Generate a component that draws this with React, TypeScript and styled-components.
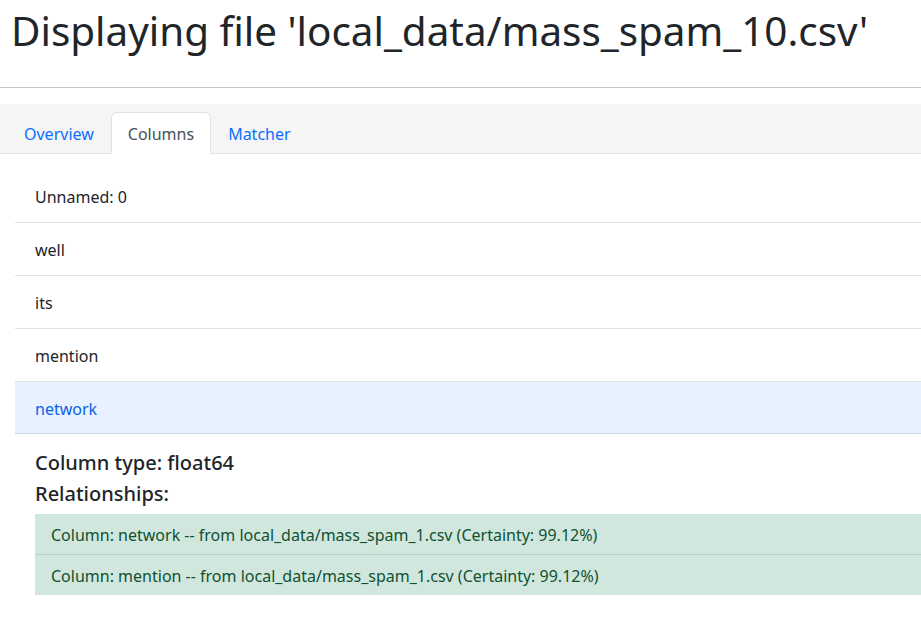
import React from "react";
import styled, { createGlobalStyle } from "styled-components";

const Global = createGlobalStyle`
  html, body { margin: 0; padding: 0; background: #fff; }
  body {
    font-family: "Noto Sans", "Liberation Sans", sans-serif;
    color: #212529;
    font-size: 16px;
    line-height: 1.5;
  }
  * { box-sizing: border-box; }
`;

const Page = styled.div`
  width: 921px;
  overflow: hidden;
`;

const Title = styled.h1`
  margin: 0;
  padding: 7px 0 0 11px;
  font-size: 40.4px;
  font-weight: 400;
  line-height: 48px;
  white-space: nowrap;
`;

const Rule = styled.hr`
  margin: 32px 0 16px;
  border: 0;
  border-top: 1px solid #c6c6c6;
`;

const TabBar = styled.div`
  background: #f5f5f5;
  display: flex;
  padding: 8px 7px 0;
  border-bottom: 1px solid #dee2e6;
`;

const Tab = styled.div<{ $active?: boolean }>`
  padding: 9px 16px 7px;
  line-height: 24px;
  margin-bottom: -1px;
  border: 1px solid ${(p) => (p.$active ? "#dee2e6" : "transparent")};
  border-bottom-color: ${(p) => (p.$active ? "#fff" : "transparent")};
  border-radius: 6px 6px 0 0;
  background: ${(p) => (p.$active ? "#fff" : "transparent")};
  color: ${(p) => (p.$active ? "#495057" : "#0d6efd")};
`;

const Content = styled.div`
  width: 1100px;
  padding: 16px 0 0 15px;
`;

const Row = styled.div<{ $open?: boolean }>`
  height: ${(p) => (p.$open ? 52 : 53)}px;
  display: flex;
  align-items: center;
  padding: ${(p) => (p.$open ? 3 : 2)}px 20px 0;
  border-bottom: 1px solid ${(p) => (p.$open ? "#cfd9e6" : "#dee2e6")};
  background: ${(p) => (p.$open ? "#e7f1ff" : "#fff")};
  color: ${(p) => (p.$open ? "#0c63e4" : "#212529")};
`;

const Body = styled.div`
  padding: 17px 20px 16px;
`;

const Heading = styled.h5<{ $tight?: boolean }>`
  margin: ${(p) => (p.$tight ? "-1px 0 8px" : "0 0 8px")};
  font-size: 20px;
  font-weight: 500;
  line-height: 24px;
`;

const List = styled.div`
  display: flex;
  flex-direction: column;
`;

const Item = styled.div`
  background: #d1e7dd;
  color: #0f5132;
  padding: 9px 16px 7px;
  font-size: 16px;
  line-height: 24px;
  white-space: nowrap;
  & + & { border-top: 1px solid #b7cfc4; }
`;

const columns = ["Unnamed: 0", "well", "its", "mention"];
const rels = [
  "Column: network -- from local_data/mass_spam_1.csv (Certainty: 99.12%)",
  "Column: mention -- from local_data/mass_spam_1.csv (Certainty: 99.12%)",
];

export default function App() {
  return (
    <Page>
      <Global />
      <Title>Displaying file 'local_data/mass_spam_10.csv'</Title>
      <Rule />
      <TabBar>
        <Tab>Overview</Tab>
        <Tab $active>Columns</Tab>
        <Tab>Matcher</Tab>
      </TabBar>
      <Content>
        {columns.map((c) => (
          <Row key={c}>{c}</Row>
        ))}
        <Row $open>network</Row>
        <Body>
          <Heading>Column type: float64</Heading>
          <Heading $tight>Relationships:</Heading>
          <List>
            {rels.map((r) => (
              <Item key={r}>{r}</Item>
            ))}
          </List>
        </Body>
      </Content>
    </Page>
  );
}
